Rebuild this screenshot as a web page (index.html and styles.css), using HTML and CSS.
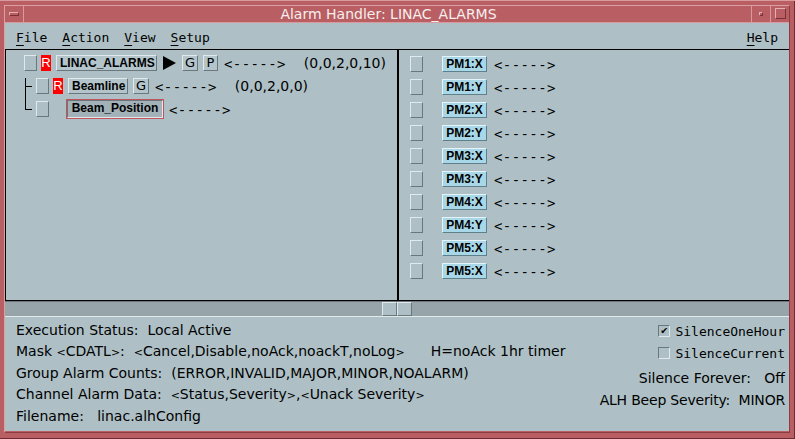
FILE: index.html
```html
<!DOCTYPE html>
<html lang="en">
<head>
    <meta charset="UTF-8">
    <title>Alarm Handler: LINAC_ALARMS</title>
    <link rel="stylesheet" href="styles.css">
</head>
<body>
    <div class="window">
        <div class="titlebar">
            <div class="wm-btn menu-btn"><span class="dash"></span></div>
            <div class="title">Alarm Handler: LINAC_ALARMS</div>
            <div class="wm-btn min-btn"><span class="dot"></span></div>
            <div class="wm-btn max-btn"><span class="box"></span></div>
        </div>

        <div class="menubar">
            <span class="menu"><u>F</u>ile</span>
            <span class="menu"><u>A</u>ction</span>
            <span class="menu"><u>V</u>iew</span>
            <span class="menu"><u>S</u>etup</span>
            <span class="menu help"><u>H</u>elp</span>
        </div>

        <div class="panes">
            <div class="pane tree">
                <div class="row">
                    <span class="sq first"></span>
                    <span class="red">R</span>
                    <span class="btn linac">LINAC_ALARMS</span>
                    <svg class="arrow-tri" width="13" height="14" viewBox="0 0 13 14"><polygon points="0,0 13,7 0,14" fill="#000"/></svg>
                    <span class="tag g1">G</span>
                    <span class="tag p1">P</span>
                    <span class="dashes d1">&lt;-----&gt;</span>
                    <span class="counts c1">(0,0,2,0,10)</span>
                </div>
                <div class="row">
                    <span class="branch mid"></span>
                    <span class="sq"></span>
                    <span class="red">R</span>
                    <span class="btn beamline">Beamline</span>
                    <span class="tag g2">G</span>
                    <span class="dashes d2">&lt;-----&gt;</span>
                    <span class="counts c2">(0,0,2,0,0)</span>
                </div>
                <div class="row">
                    <span class="branch last"></span>
                    <span class="sq"></span>
                    <span class="btn selected">Beam_Position</span>
                    <span class="dashes d3">&lt;-----&gt;</span>
                </div>
            </div>

            <div class="pane list">
                <div class="row"><span class="sq"></span><span class="chan">PM1:X</span><span class="dashes">&lt;-----&gt;</span></div>
                <div class="row"><span class="sq"></span><span class="chan">PM1:Y</span><span class="dashes">&lt;-----&gt;</span></div>
                <div class="row"><span class="sq"></span><span class="chan">PM2:X</span><span class="dashes">&lt;-----&gt;</span></div>
                <div class="row"><span class="sq"></span><span class="chan">PM2:Y</span><span class="dashes">&lt;-----&gt;</span></div>
                <div class="row"><span class="sq"></span><span class="chan">PM3:X</span><span class="dashes">&lt;-----&gt;</span></div>
                <div class="row"><span class="sq"></span><span class="chan">PM3:Y</span><span class="dashes">&lt;-----&gt;</span></div>
                <div class="row"><span class="sq"></span><span class="chan">PM4:X</span><span class="dashes">&lt;-----&gt;</span></div>
                <div class="row"><span class="sq"></span><span class="chan">PM4:Y</span><span class="dashes">&lt;-----&gt;</span></div>
                <div class="row"><span class="sq"></span><span class="chan">PM5:X</span><span class="dashes">&lt;-----&gt;</span></div>
                <div class="row"><span class="sq"></span><span class="chan">PM5:X</span><span class="dashes">&lt;-----&gt;</span></div>
            </div>
        </div>

        <div class="hscroll">
            <div class="thumb"></div>
            <div class="thumb"></div>
        </div>

        <div class="status">
            <div class="info">
                <p>Execution Status:&nbsp; Local Active</p>
                <p>Mask <span class="ab">&lt;</span>CDATL<span class="ab">&gt;</span>:&nbsp; <span class="ab">&lt;</span>Cancel,Disable,noAck,noackT,noLog<span class="ab">&gt;</span><span class="hint">H=noAck 1hr timer</span></p>
                <p>Group Alarm Counts:&nbsp; (ERROR,INVALID,MAJOR,MINOR,NOALARM)</p>
                <p>Channel Alarm Data:&nbsp; <span class="ab">&lt;</span>Status,Severity<span class="ab">&gt;</span>,<span class="ab">&lt;</span>Unack Severity<span class="ab">&gt;</span></p>
                <p>Filename:&nbsp;&nbsp; linac.alhConfig</p>
            </div>
            <div class="controls">
                <label class="toggle"><span class="check on">&#10004;</span>SilenceOneHour</label>
                <label class="toggle second"><span class="check"></span>SilenceCurrent</label>
                <p class="forever">Silence Forever:&nbsp;&nbsp; Off</p>
                <p class="beep">ALH Beep Severity:&nbsp; MINOR</p>
            </div>
        </div>
    </div>
</body>
</html>
```

FILE: styles.css
```css
* {
    margin: 0;
    padding: 0;
    box-sizing: border-box;
}
body {
    width: 795px;
    height: 439px;
    background: #b95f63;
    overflow: hidden;
    font-family: "DejaVu Sans", sans-serif;
}
.window {
    width: 795px;
    height: 439px;
    padding: 5px 6px 7px 5px;
    border-top: 1px solid #d99a9d;
    box-shadow: inset -1px -1px 0 #6e2a2f;
    position: relative;
}
.window::before {
    content: "";
    position: absolute;
    left: 4px;
    top: 4px;
    right: 5px;
    bottom: 6px;
    border-top: 1px solid #dc9fa2;
    border-left: 1px solid #dc9fa2;
    border-right: 1px solid #8a3c41;
    border-bottom: 1px solid #8a3c41;
    pointer-events: none;
}

/* title bar */
.titlebar {
    height: 18px;
    display: flex;
    align-items: stretch;
    border-bottom: 1px solid #d99a9d;
    margin-top: -1px;
}
.wm-btn {
    width: 19px;
    display: flex;
    align-items: center;
    justify-content: center;
}
.menu-btn {
    border-right: 1px solid #d99a9d;
}
.menu-btn .dash {
    width: 10px;
    height: 4px;
    border-top: 1px solid #e3b0b2;
    border-left: 1px solid #e3b0b2;
    border-right: 1px solid #7a3035;
    border-bottom: 1px solid #7a3035;
}
.title {
    flex: 1;
    text-align: center;
    color: #f6eeee;
    font-size: 14px;
    line-height: 18px;
    padding-left: 2px;
}
.min-btn {
    border-left: 1px solid #d99a9d;
}
.min-btn .dot {
    width: 4px;
    height: 4px;
    border-top: 1px solid #e3b0b2;
    border-left: 1px solid #e3b0b2;
    border-right: 1px solid #7a3035;
    border-bottom: 1px solid #7a3035;
}
.max-btn {
    border-left: 1px solid #d99a9d;
}
.max-btn .box {
    width: 11px;
    height: 11px;
    border-top: 1px solid #e3b0b2;
    border-left: 1px solid #e3b0b2;
    border-right: 1px solid #7a3035;
    border-bottom: 1px solid #7a3035;
}

/* menu bar */
.menubar {
    height: 26px;
    background: #aec0c6;
    display: flex;
    align-items: center;
    padding-left: 11px;
    font-family: "DejaVu Sans Mono", monospace;
    font-size: 13px;
    color: #000;
}
.menu {
    margin-right: 15px;
    padding-top: 2px;
}
.menu u {
    text-underline-offset: 3px;
}
.menu.help {
    margin-left: auto;
    margin-right: 11px;
}

/* panes */
.panes {
    height: 252px;
    display: flex;
    background: #aec0c6;
    border-top: 1px solid #000;
    border-bottom: 1px solid #000;
}
.pane {
    height: 100%;
    padding-top: 1px;
}
.tree {
    width: 393px;
    border-left: 1px solid #000;
    border-right: 1px solid #000;
}
.list {
    flex: 1;
    border-left: 1px solid #000;
    padding-top: 2px;
}
.row {
    height: 23px;
    display: flex;
    align-items: center;
}

.sq {
    width: 13px;
    height: 16px;
    background: #aec0c6;
    border-top: 1px solid #e0e9ec;
    border-left: 1px solid #e0e9ec;
    border-right: 1px solid #6a787d;
    border-bottom: 1px solid #6a787d;
}
.tree .sq {
    margin-left: 4px;
}
.tree .sq.first {
    margin-left: 18px;
}
.red {
    width: 10px;
    height: 16px;
    margin-left: 4px;
    background: #ff0000;
    color: #fff;
    font-family: "Liberation Sans", sans-serif;
    font-size: 13px;
    line-height: 16px;
    text-align: center;
}
.btn {
    height: 16px;
    margin-left: 5px;
    padding: 0 3px;
    background: #b3c5cb;
    border-top: 1px solid #e0e9ec;
    border-left: 1px solid #e0e9ec;
    border-right: 1px solid #6a787d;
    border-bottom: 1px solid #6a787d;
    font-family: "Liberation Sans", sans-serif;
    font-weight: bold;
    font-size: 12px;
    line-height: 14px;
    text-align: center;
}
.btn.linac {
    width: 101px;
}
.btn.beamline {
    width: 60px;
}
.btn.selected {
    width: 96px;
    height: 18px;
    margin-left: 18px;
    line-height: 14px;
    background: #a2b2b8;
    outline: 1px solid #c2535a;
    border-top: 1px solid #6a787d;
    border-left: 1px solid #6a787d;
    border-right: 1px solid #e0e9ec;
    border-bottom: 1px solid #e0e9ec;
}
.arrow-tri {
    margin-left: 6px;
}
.tag {
    width: 16px;
    height: 16px;
    background: #b3c5cb;
    border-top: 1px solid #e0e9ec;
    border-left: 1px solid #e0e9ec;
    border-right: 1px solid #6a787d;
    border-bottom: 1px solid #6a787d;
    font-size: 13px;
    line-height: 14px;
    text-align: center;
}
.tag.g1 {
    margin-left: 6px;
}
.tag.p1 {
    width: 15px;
    margin-left: 5px;
}
.tag.g2 {
    margin-left: 5px;
}
.dashes {
    font-family: "DejaVu Sans Mono", monospace;
    font-size: 14px;
    letter-spacing: 0.4px;
    line-height: 16px;
    padding-top: 3px;
    margin-left: 6px;
}
.counts {
    font-size: 14px;
}
.c1 {
    margin-left: 18px;
}
.c2 {
    margin-left: 18px;
}
.dashes.d3 {
    margin-left: 6px;
}

.branch {
    width: 7px;
    height: 23px;
    margin-left: 19px;
    position: relative;
}
.branch::before {
    content: "";
    position: absolute;
    left: 0;
    top: 4px;
    bottom: 0;
    border-left: 1px solid #000;
}
.branch.last::before {
    top: 0;
    bottom: 11px;
}
.branch::after {
    content: "";
    position: absolute;
    left: 0;
    right: 0;
    top: 12px;
    border-top: 1px solid #000;
}

/* channel list */
.list .sq {
    margin-left: 11px;
}
.chan {
    width: 45px;
    height: 16px;
    margin-left: 19px;
    background: #a8d8e8;
    border-top: 1px solid #e4f4fa;
    border-left: 1px solid #e4f4fa;
    border-right: 1px solid #5f7f8a;
    border-bottom: 1px solid #5f7f8a;
    font-family: "Liberation Sans", sans-serif;
    font-weight: bold;
    font-size: 12px;
    line-height: 14px;
    text-align: center;
}
.list .dashes {
    margin-left: 7px;
}

/* horizontal scrollbar */
.hscroll {
    height: 16px;
    background: #97a5aa;
    border-top: 1px solid #6a787d;
    border-bottom: 1px solid #e0e9ec;
    display: flex;
    padding-left: 377px;
}
.thumb {
    width: 15px;
    height: 14px;
    background: #aec0c6;
    border-top: 1px solid #e0e9ec;
    border-left: 1px solid #e0e9ec;
    border-right: 1px solid #6a787d;
    border-bottom: 1px solid #6a787d;
}

/* status area */
.status {
    height: 114px;
    background: #aec0c6;
    display: flex;
    justify-content: space-between;
    padding: 1px 4px 0 11px;
    font-size: 14px;
    color: #000;
}
.info {
    padding-top: 2px;
}
.info p {
    line-height: 21px;
    white-space: pre;
}
.ab {
    font-size: 11px;
}
.hint {
    margin-left: 26px;
}
.controls {
    display: flex;
    flex-direction: column;
    align-items: flex-end;
    padding-top: 3px;
}
.toggle {
    display: flex;
    align-items: center;
    height: 20px;
    font-family: "DejaVu Sans Mono", monospace;
    font-size: 13px;
}
.toggle.second {
    margin-top: 2px;
}
.check {
    width: 12px;
    height: 12px;
    margin-right: 5px;
    border-top: 1px solid #6a787d;
    border-left: 1px solid #6a787d;
    border-right: 1px solid #e0e9ec;
    border-bottom: 1px solid #e0e9ec;
    font-size: 11px;
    line-height: 10px;
    text-align: center;
}
.forever {
    margin-top: 5px;
    line-height: 21px;
}
.beep {
    line-height: 23px;
    letter-spacing: -0.2px;
}
```
